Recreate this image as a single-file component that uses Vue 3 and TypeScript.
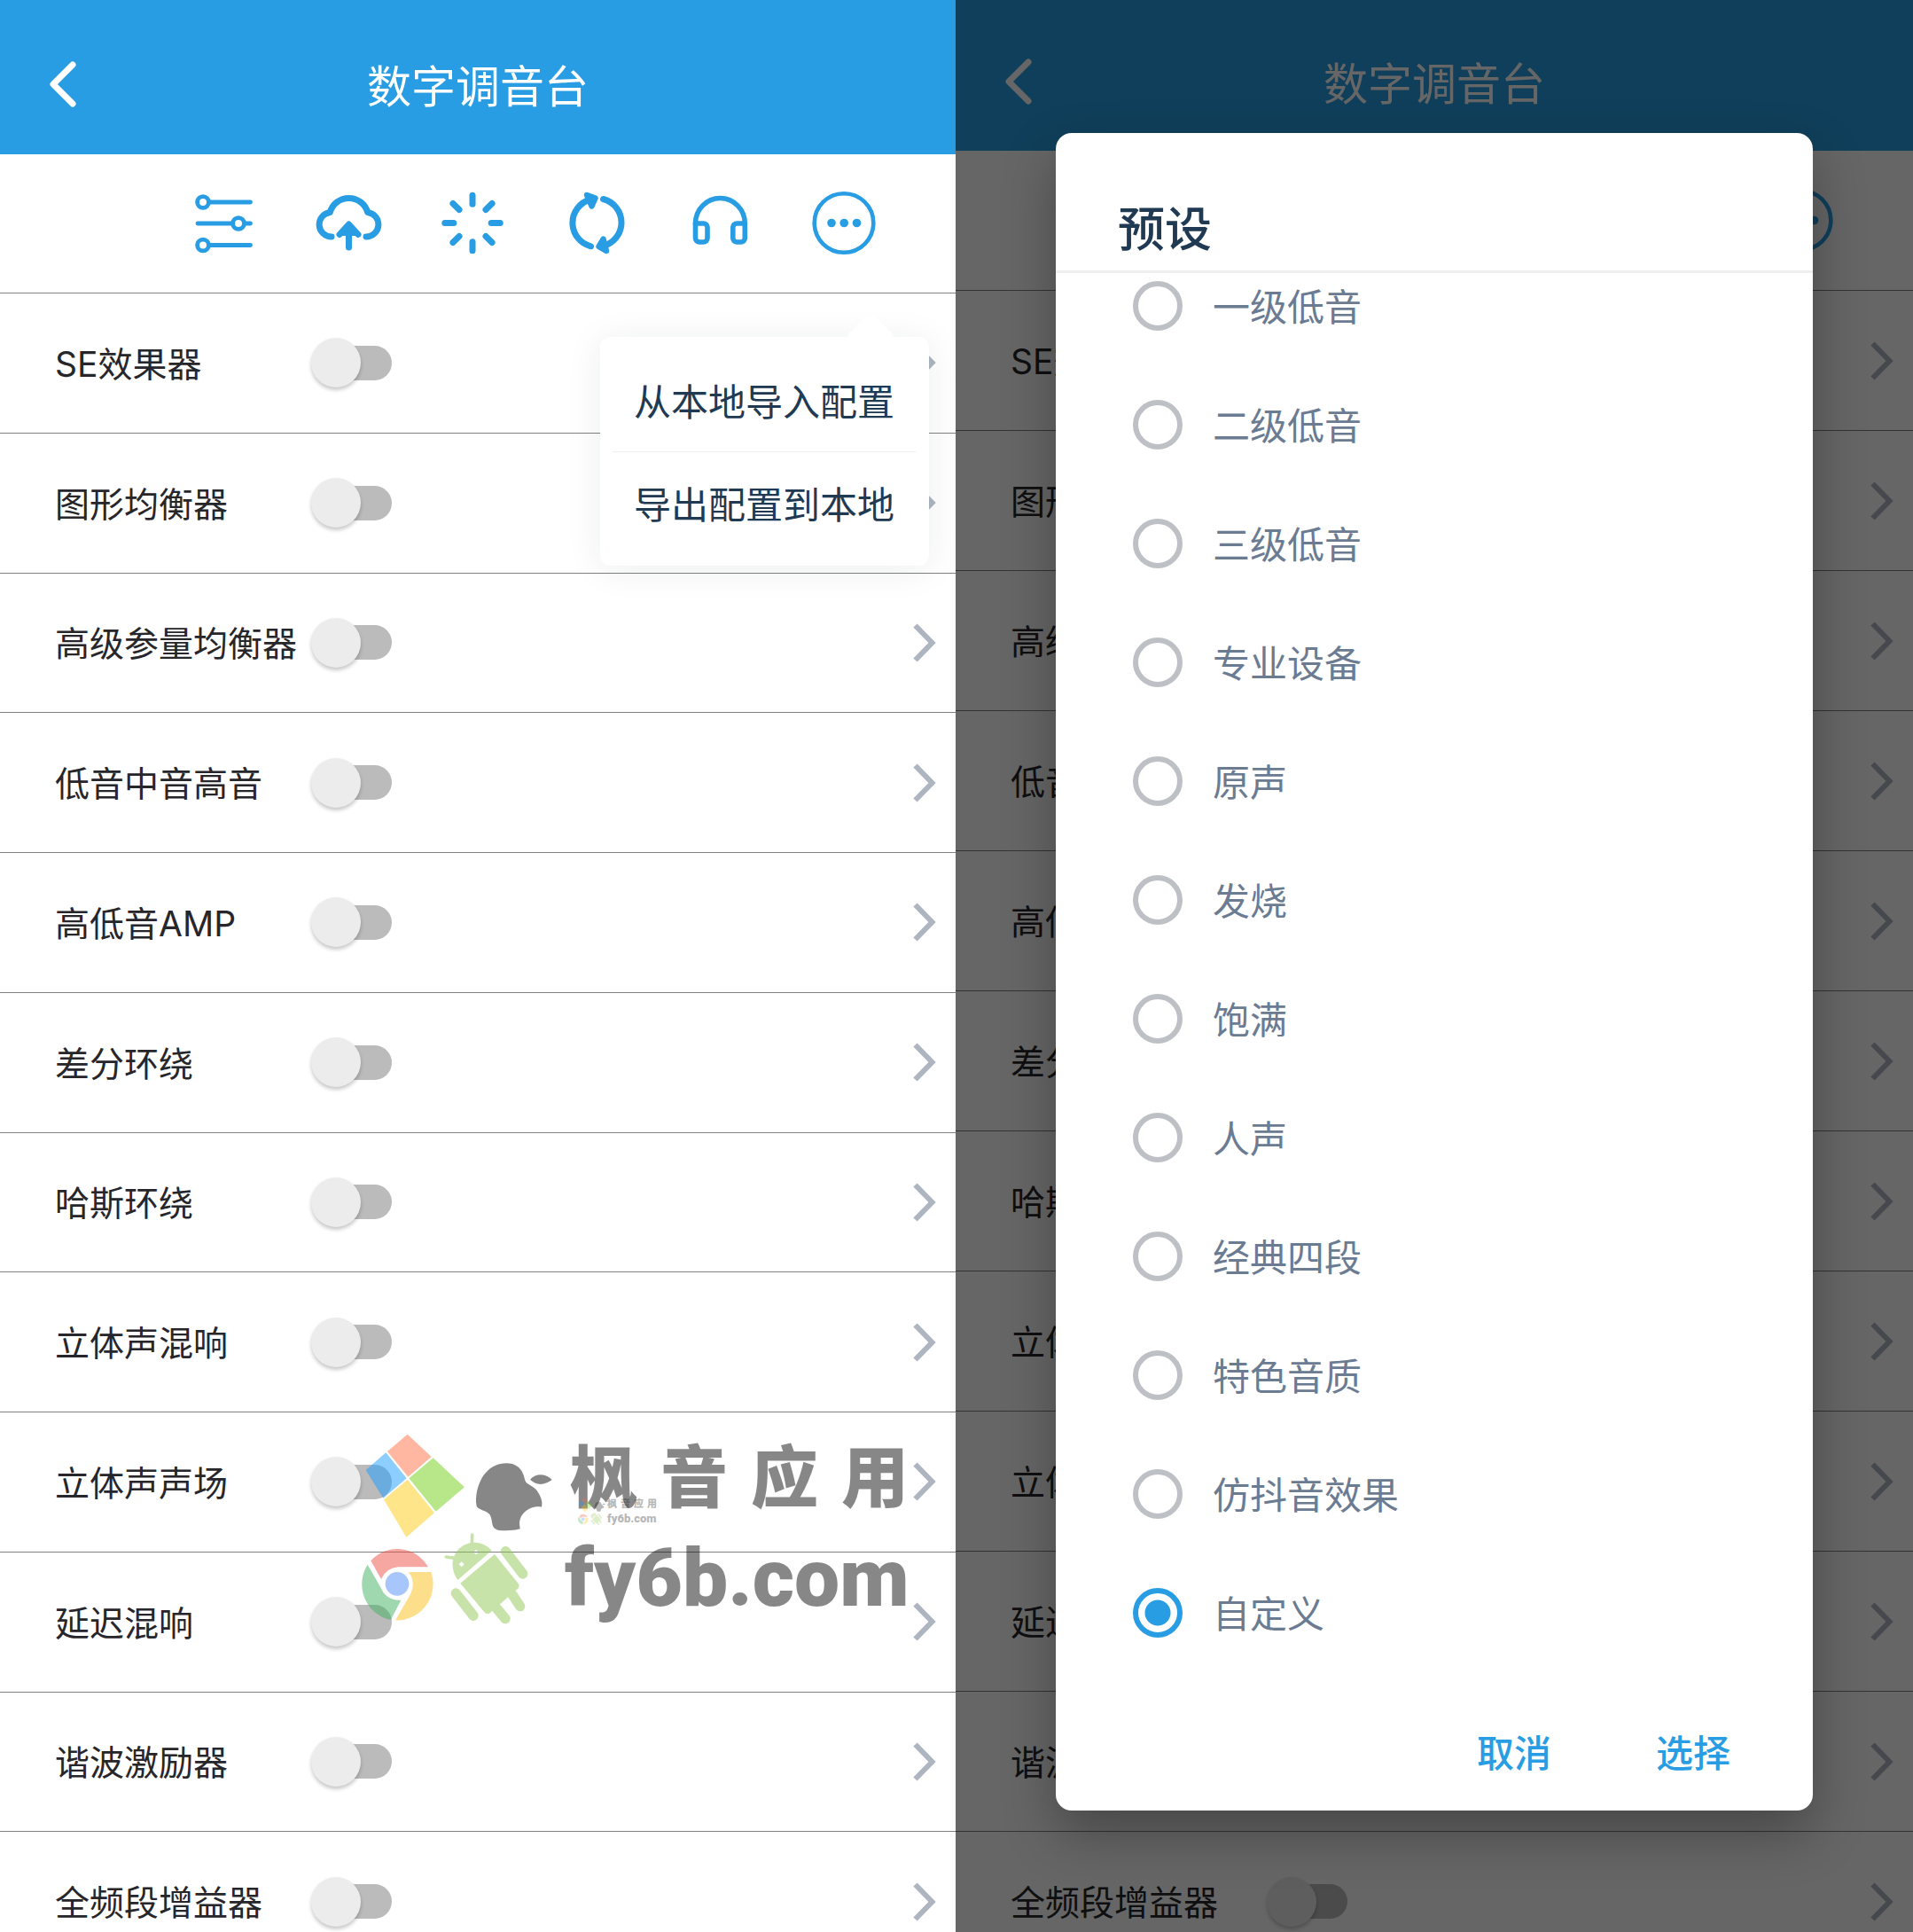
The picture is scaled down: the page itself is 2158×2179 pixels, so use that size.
<script setup lang="ts">
import { ref, reactive } from 'vue'

interface Screen {
  id: string
  showMenu: boolean
  showDialog: boolean
}

const screens: Screen[] = [
  { id: 'menu', showMenu: true, showDialog: false },
  { id: 'preset', showMenu: false, showDialog: true },
]

const effects: string[] = [
  'SE效果器',
  '图形均衡器',
  '高级参量均衡器',
  '低音中音高音',
  '高低音AMP',
  '差分环绕',
  '哈斯环绕',
  '立体声混响',
  '立体声声场',
  '延迟混响',
  '谐波激励器',
  '全频段增益器',
]

const presets: string[] = [
  '一级低音',
  '二级低音',
  '三级低音',
  '专业设备',
  '原声',
  '发烧',
  '饱满',
  '人声',
  '经典四段',
  '特色音质',
  '仿抖音效果',
  '自定义',
]

const menuItems: string[] = ['从本地导入配置', '导出配置到本地']
const brand: string[] = ['枫', '音', '应', '用']
const marks: string[] = ['large', 'small']
const angles: number[] = [0, 45, 90, 135, 180, 225, 270, 315]

const enabled = reactive<Record<string, boolean>>({})
const preset = ref<string>('自定义')
</script>

<template>
  <main class="board">
    <section v-for="s in screens" :key="s.id" class="screen" :class="s.id">
      <header class="bar">
        <button class="back" type="button" aria-label="返回">
          <svg viewBox="0 0 40 60"><path d="M31 8 9 30l22 22" /></svg>
        </button>
        <h1>数字调音台</h1>
      </header>

      <nav class="tools">
        <button type="button" aria-label="均衡">
          <svg viewBox="0 0 80 80" class="icon">
            <g stroke-width="4.8">
              <path d="M25 16h45.500M11 40h40M65 40h5.500M25 64.500h45.500" />
              <circle cx="17" cy="16" r="6.400" />
              <circle cx="57" cy="40" r="6.400" />
              <circle cx="17" cy="64.500" r="6.400" />
            </g>
          </svg>
        </button>
        <button type="button" aria-label="上传">
          <svg viewBox="0 0 80 80" class="icon" stroke-width="7">
            <path d="M22 55A13.800 13.800 0 0 1 20.300 27.500A22 22 0 0 1 62.700 27.500A13.800 13.800 0 0 1 61 55" />
            <path d="M41.500 67V41.500M31 52.500 41.500 41 52 52.500" />
            <path class="solid" stroke="none" d="M33 54 41.500 44 50 54Z" />
          </svg>
        </button>
        <button type="button" aria-label="加载">
          <svg viewBox="0 0 80 80" class="icon" stroke-width="7">
            <path v-for="a in angles" :key="a" d="M41 8.300v10" :transform="`rotate(${a} 41 39.500)`" />
          </svg>
        </button>
        <button type="button" aria-label="刷新">
          <svg viewBox="0 0 80 80" class="icon" stroke-width="7">
            <path d="M34.500 65.800A27.300 27.300 0 0 1 34 13" />
            <path d="M48.500 12.500A27.300 27.300 0 0 1 48 65.500" />
            <path class="solid" stroke-width="6.400" d="M30 8 39.500 11.500 35.500 20.500ZM52 71 43.500 66 48.500 57.500Z" />
          </svg>
        </button>
        <button type="button" aria-label="耳机">
          <svg viewBox="0 0 80 80" class="icon" stroke-width="5.600">
            <path d="M12.500 40A27.900 28.500 0 0 1 68.300 40" />
            <path d="M12.500 40H21.500a4.500 4.500 0 0 1 4.500 4.500V56.500a4.500 4.500 0 0 1-4.500 4.500H17a4.500 4.500 0 0 1-4.500-4.500Z" />
            <path d="M68.300 40H59.300a4.500 4.500 0 0 0-4.500 4.500V56.500a4.500 4.500 0 0 0 4.500 4.500H63.800a4.500 4.500 0 0 0 4.500-4.500Z" />
          </svg>
        </button>
        <button type="button" aria-label="更多">
          <svg viewBox="0 0 80 80" class="icon" stroke-width="4.600">
            <circle cx="40" cy="39.500" r="33.300" />
            <g class="dots">
              <circle cx="26" cy="39.500" r="4.800" />
              <circle cx="40.200" cy="39.500" r="4.800" />
              <circle cx="54.500" cy="39.500" r="4.800" />
            </g>
          </svg>
        </button>
      </nav>

      <ul class="effects">
        <li v-for="(name, i) in effects" :key="name">
          <label :for="`${s.id}-${i}`">{{ name }}</label>
          <input :id="`${s.id}-${i}`" v-model="enabled[name]" class="switch" type="checkbox" role="switch" />
          <button class="more" type="button" :aria-label="name + '设置'">
            <svg viewBox="0 0 26 44"><path d="M2.500 2.500 21.500 22 2.500 41.500" /></svg>
          </button>
        </li>
      </ul>

      <template v-if="s.showMenu">
        <div class="popover" role="menu">
          <button v-for="m in menuItems" :key="m" type="button" role="menuitem">{{ m }}</button>
        </div>

        <div v-for="m in marks" :key="m" class="mark" :class="m" aria-hidden="true">
          <svg viewBox="55 80 645 645" class="logos">
            <path fill="#ff7147" d="M210 82 291 158 212 226 142 140Z" />
            <path fill="#199fff" d="M137 144 207 231 128 298 69 203Z" />
            <path fill="#73d115" d="M297 162 403 261 306 343 215 231Z" />
            <path fill="#ffcd15" d="M210 235 301 348 206 430 130 303Z" />
            <g fill="#111">
              <path d="M442 300C448 225 490 180 545 180C590 180 604 215 607 235C614 258 640 250 657 287C667 308 666 318 664 328C630 322 590 345 589 385L591 402C570 408 545 409 520 407C488 400 502 375 488 353C477 338 452 340 444 325Q441 312 442 300Z" />
              <path d="M625 235Q640 219 662 219Q685 221 699 236Q680 250 660 251Q640 249 625 235Z" />
            </g>
            <path fill="#ef5145" d="M86 510A121 123 0 0 1 280 531H178Q138 535 121 572Z" />
            <path fill="#41b161" d="M75 523 119 600Q138 646 188 643L153 710A121 123 0 0 1 75 523Z" />
            <path fill="#fdc119" d="M290 548A121 123 0 0 1 169 711L220 624Q240 580 213 548Z" />
            <circle fill="#518ff9" cx="175" cy="588" r="40" />
            <g fill="#93c957" stroke="#93c957" stroke-linecap="round">
              <path stroke="none" fill-rule="evenodd" d="M380 575C352 535 360 490 388 466C420 440 465 443 495 475ZM442 472l9 9-9 8-9-8ZM393 513l9 9-9 9-9-9Z" />
              <path stroke="none" d="M505 488 585 587Q590 595 585 603L490 686Q480 694 472 686L389 586Z" />
              <path stroke-width="11" d="M428 452 429 422M368 501 341 497" />
              <path stroke-width="34" d="M542 478 600 554M374 620 433 696M513 672 541 706M566 626 591 664" />
            </g>
          </svg>
          <div class="words">
            <p class="brand"><span v-for="c in brand" :key="c">{{ c }}</span></p>
            <p class="site">fy6b.com</p>
          </div>
        </div>
      </template>

      <div v-if="s.showDialog" class="overlay">
        <form class="dialog" role="dialog" aria-labelledby="dialog-title" @submit.prevent>
          <h2 id="dialog-title">预设</h2>
          <div class="options">
            <label v-for="p in presets" :key="p">
              <input v-model="preset" type="radio" name="preset" :value="p" />
              <span>{{ p }}</span>
            </label>
          </div>
          <footer>
            <button type="button">取消</button>
            <button type="submit">选择</button>
          </footer>
        </form>
      </div>
    </section>
  </main>
</template>

<style>
body {
  margin: 0;
}
</style>

<style scoped>
.board {
  display: grid;
  grid-template-columns: 1078fr 1080fr;
  font-family: Inter, "Noto Sans CJK SC", sans-serif;
  color: #26262b;
}
h1, h2, p, ul {
  margin: 0;
  padding: 0;
}
button {
  border: 0;
  padding: 0;
  background: none;
  color: inherit;
  font: inherit;
}
svg {
  display: block;
}
.screen {
  position: relative;
  height: 100vh;
  overflow: hidden;
  background: #fff;
}
.bar {
  display: grid;
  grid-template-columns: 140px 1fr 140px;
  align-items: center;
  box-sizing: border-box;
  height: 174px;
  padding-top: 16px;
  background: #299de3;
  color: #fff;
}
.preset .bar {
  height: 170px;
  padding-top: 14px;
}
.bar h1 {
  padding-top: 6px;
  font-size: 50px;
  line-height: 60px;
  font-weight: 400;
  text-align: center;
}
.back svg {
  width: 40px;
  height: 60px;
  margin-left: 51px;
  fill: none;
  stroke: #fff;
  stroke-width: 7;
  stroke-linecap: round;
  stroke-linejoin: round;
}
.tools {
  display: flex;
  justify-content: flex-end;
  height: 156px;
  padding-right: 56px;
  border-bottom: 1px solid #808080;
}
.preset .tools {
  height: 157px;
}
.tools button {
  display: flex;
  align-items: center;
  justify-content: center;
  width: 140px;
}
.icon {
  width: 80px;
  height: 80px;
  fill: none;
  stroke: #299de3;
  stroke-linecap: round;
  stroke-linejoin: round;
}
.icon .solid {
  fill: #299de3;
}
.icon .dots {
  fill: #299de3;
  stroke: none;
}
.effects {
  display: grid;
  grid-auto-rows: 1fr;
  height: calc(100vh - 286px);
  list-style: none;
}
.preset .effects {
  height: calc(100vh - 283px);
}
.effects li {
  display: grid;
  grid-template-columns: 289px 91px 1fr;
  align-items: center;
  padding: 0 22px 0 62px;
  border-bottom: 1px solid #808080;
}
.effects label {
  padding-top: 3px;
  font-size: 39px;
  line-height: 48px;
  white-space: nowrap;
}
.switch {
  appearance: none;
  display: flex;
  align-items: center;
  position: relative;
  width: 91px;
  height: 56px;
  margin: 0;
}
.switch::before {
  content: "";
  width: 80px;
  height: 39px;
  margin-left: auto;
  border-radius: 20px;
  background: #bbb;
}
.switch::after {
  content: "";
  position: absolute;
  left: 0;
  top: 0;
  width: 56px;
  height: 56px;
  border-radius: 50%;
  background: #ececec;
  box-shadow: 0 3px 4px rgba(0, 0, 0, 0.22);
}
.switch:checked::before {
  background: #a5d6f4;
}
.switch:checked::after {
  left: auto;
  right: 0;
  background: #299de3;
}
.more {
  justify-self: end;
}
.more svg {
  width: 26px;
  height: 44px;
  fill: none;
  stroke: #adb5c0;
  stroke-width: 6;
}
.popover {
  position: absolute;
  top: 380px;
  right: 30px;
  padding: 14px 15px 13px 14px;
  border-radius: 12px;
  background: #fff;
  box-shadow: 0 4px 40px rgba(20, 40, 40, 0.08);
  color: #213a53;
}
.popover::before {
  content: "";
  position: absolute;
  top: -20px;
  right: 46px;
  width: 40px;
  height: 40px;
  border-radius: 6px;
  background: #fff;
  transform: rotate(45deg);
}
.popover button {
  position: relative;
  display: block;
  box-sizing: border-box;
  height: 116px;
  padding: 4px 24px 0;
  font-size: 42px;
  line-height: 60px;
}
.popover button:first-of-type {
  height: 115px;
}
.popover button + button {
  border-top: 1px solid #efefef;
}
.mark {
  position: absolute;
  display: flex;
  opacity: 0.5;
  color: #111;
  pointer-events: none;
}
.mark p {
  font-family: Roboto, "Noto Sans CJK SC", sans-serif;
  font-weight: 900;
}
.brand {
  display: flex;
}
.large {
  left: 408px;
  top: 1617px;
  gap: 14px;
}
.large .logos {
  width: 215px;
  height: 215px;
}
.large .words {
  padding-top: 4px;
}
.large .brand {
  gap: 26px;
  margin-left: 6px;
  font-size: 76px;
  line-height: 94px;
}
.large .site {
  font-size: 91px;
  line-height: 130px;
}
.small {
  left: 652px;
  top: 1689px;
  gap: 2px;
  opacity: 0.3;
}
.small .logos {
  width: 31px;
  height: 31px;
}
.small .words {
  padding-top: 1px;
}
.small .brand {
  gap: 4px;
  font-size: 11px;
  line-height: 13px;
}
.small .site {
  font-size: 13px;
  line-height: 19px;
}
.overlay {
  position: absolute;
  inset: 0;
  display: flex;
  padding: 150px 113px 137px;
  background: rgba(0, 0, 0, 0.6);
}
.dialog {
  flex: 1;
  display: flex;
  flex-direction: column;
  border-radius: 18px;
  background: #fff;
  box-shadow: 0 26px 60px rgba(0, 0, 0, 0.3);
}
.dialog h2 {
  padding: 75px 70px 12px;
  border-bottom: 3px solid #efefef;
  color: #213a53;
  font-size: 53px;
  line-height: 68px;
  font-weight: 500;
}
.options {
  display: flex;
  flex-direction: column;
  gap: 78px;
  padding: 9px 87px 0;
}
.options label {
  display: flex;
  align-items: center;
  gap: 34px;
  height: 56px;
  color: #6b7b92;
  font-size: 42px;
  line-height: 56px;
}
.options span {
  padding-top: 4px;
}
.options input {
  appearance: none;
  box-sizing: border-box;
  width: 56px;
  height: 56px;
  margin: 0;
  border: 6px solid #bdc1c5;
  border-radius: 50%;
}
.options input:checked {
  border-color: #299de3;
  background: radial-gradient(circle, #299de3 14px, transparent 15px);
}
.dialog footer {
  display: flex;
  justify-content: flex-end;
  gap: 60px;
  margin-top: auto;
  padding: 0 64px 34px;
  color: #299de3;
}
.dialog footer button {
  padding: 0 29px;
  font-size: 42px;
  line-height: 60px;
  font-weight: 500;
}
</style>
